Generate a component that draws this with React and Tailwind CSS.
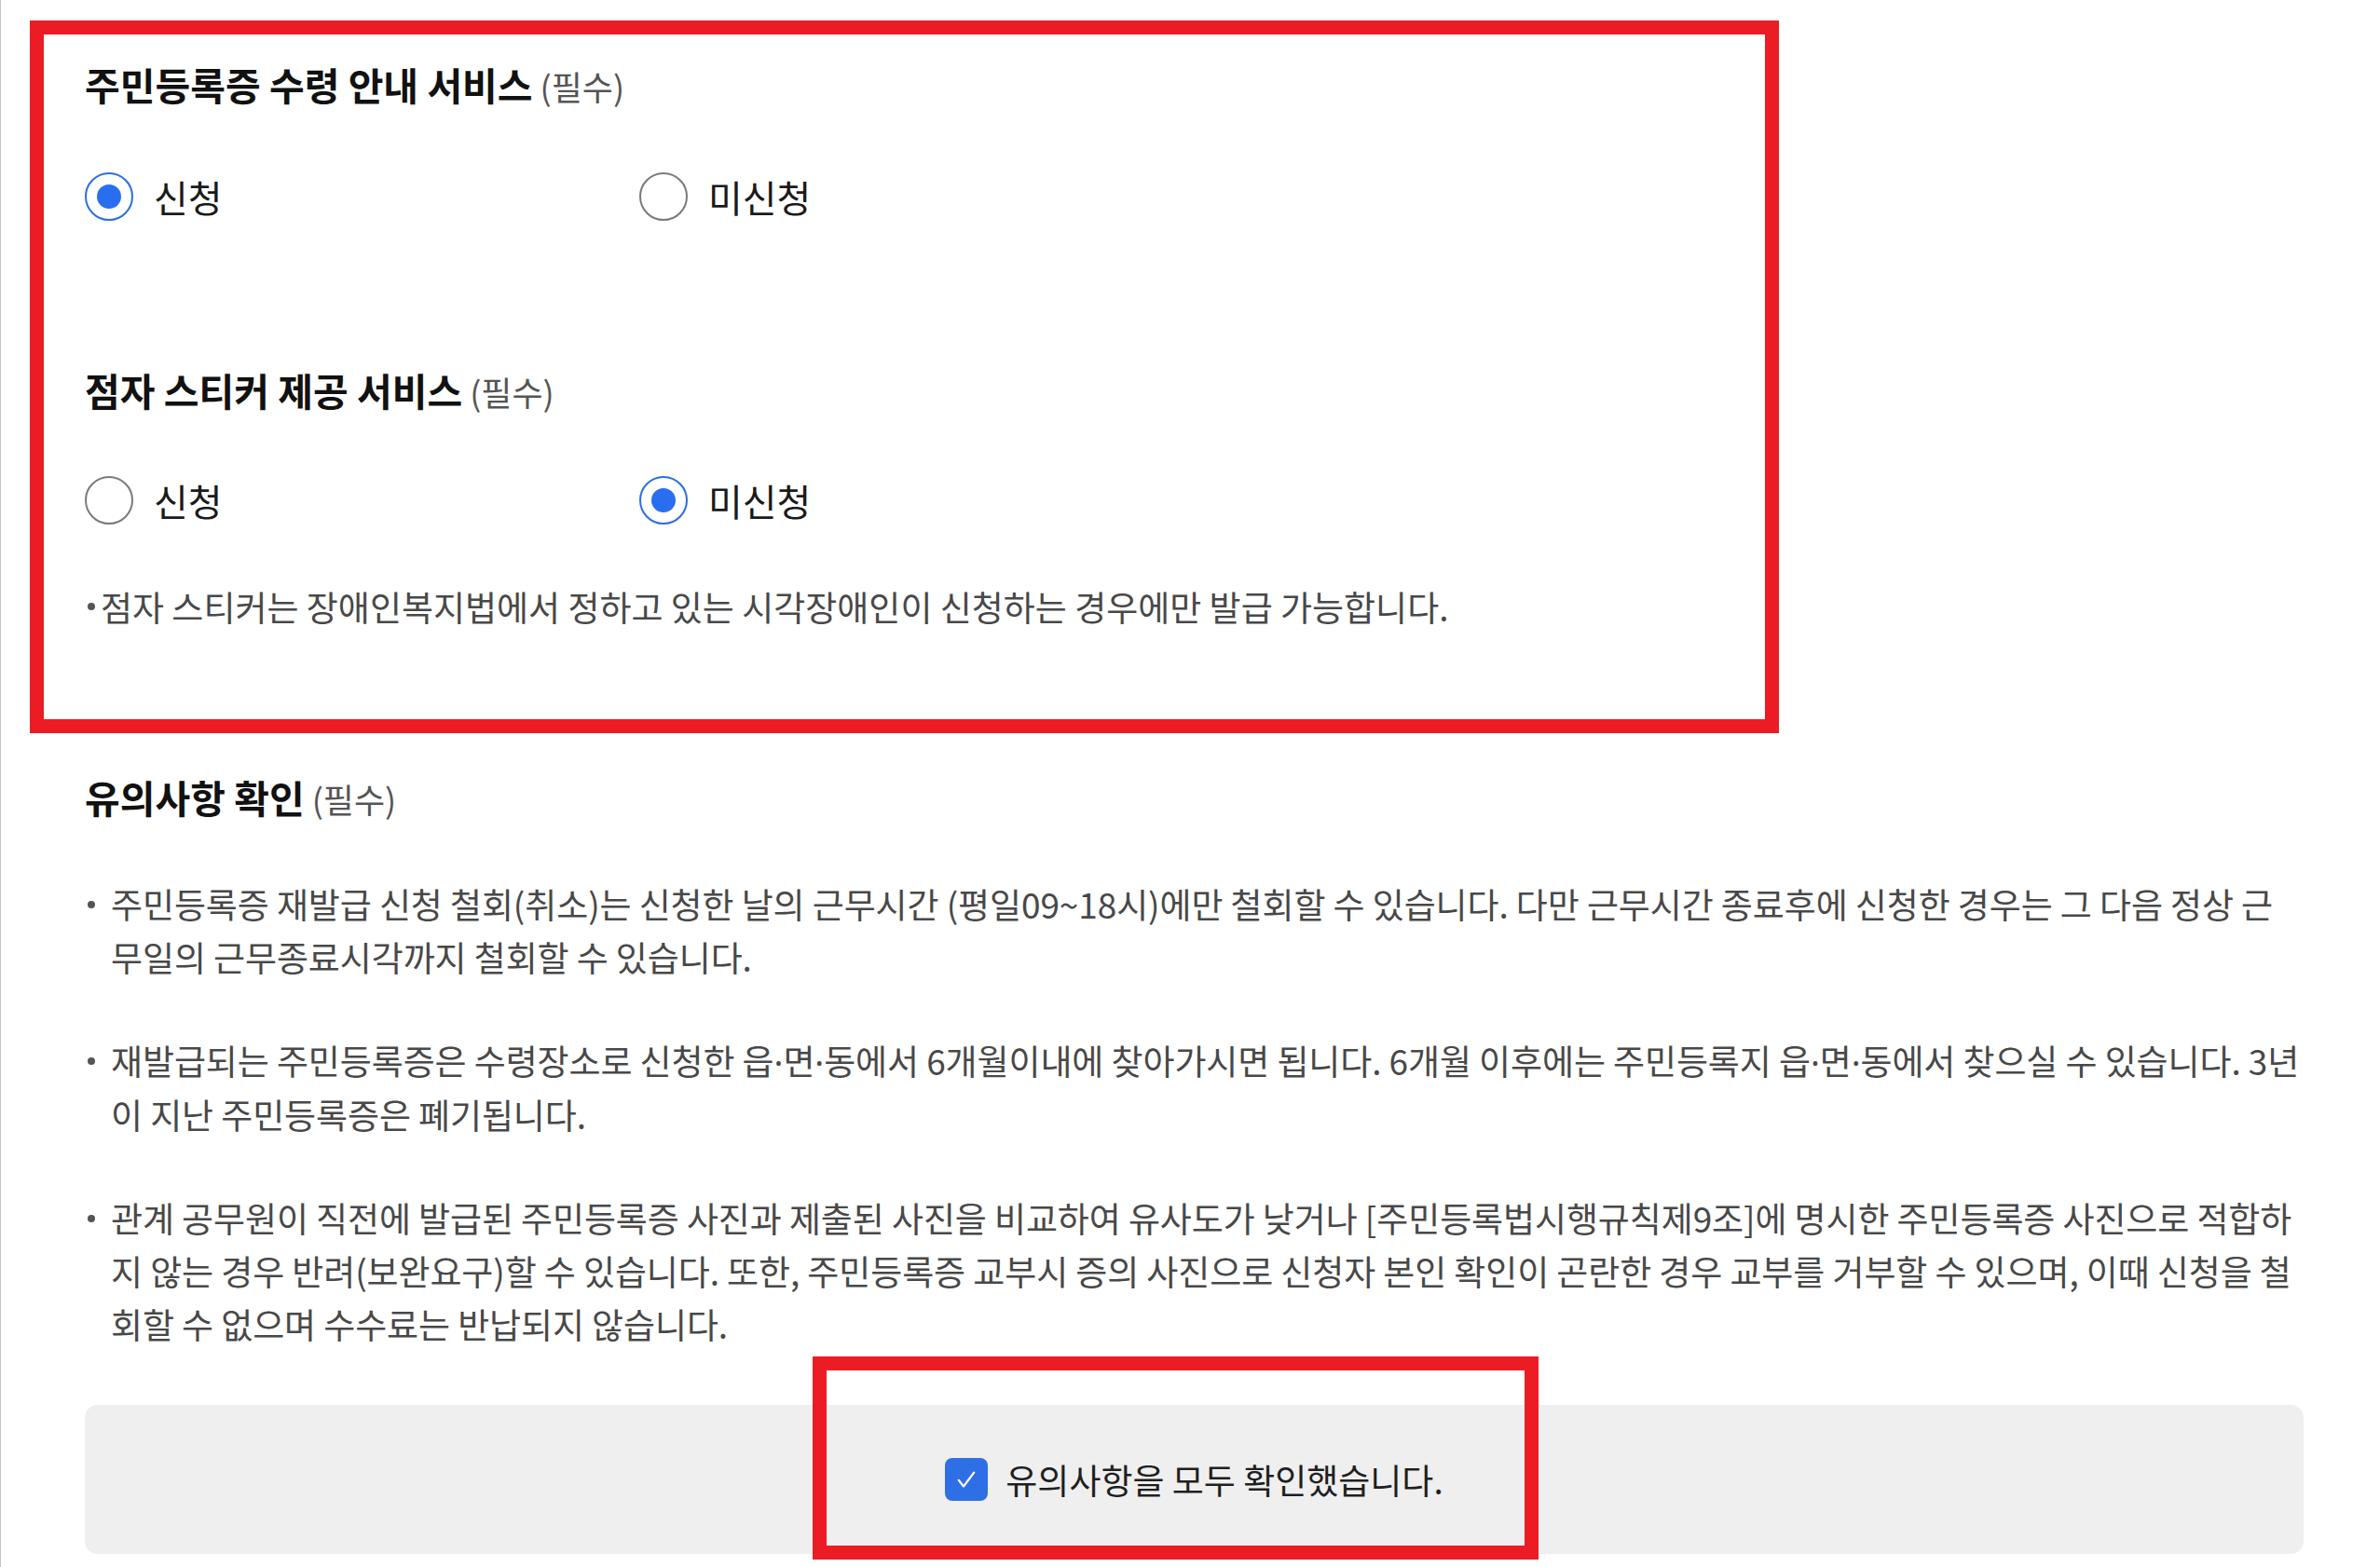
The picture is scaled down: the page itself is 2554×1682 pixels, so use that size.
import clsx from 'clsx'

const Radio = ({ checked, label }) => (
  <label className="flex items-center gap-[22px] w-[595px]">
    <span
      className={clsx(
        'w-[52px] h-[52px] rounded-full border-2 flex items-center justify-center bg-white',
        checked ? 'border-[#2c6ee0]' : 'border-[#7a7a7a]'
      )}
    >
      {checked && <span className="w-[26px] h-[26px] rounded-full bg-[#2a6ef0]" />}
    </span>
    <span className="text-[40px] leading-[56px] text-[#1a1a1a]">{label}</span>
  </label>
)

const Heading = ({ children, className }) => (
  <h2 className={clsx('text-[41px] leading-[48px] font-bold text-[#111] whitespace-nowrap', className)}>
    {children}
    <span className="ml-[8px] text-[36px] font-normal text-[#555]">(필수)</span>
  </h2>
)

const Dot = ({ className }) => (
  <span className={clsx('shrink-0 flex items-center', className)}>
    <span className="w-[8px] h-[8px] rounded-full bg-[#555]" />
  </span>
)

// 가운뎃점은 CJK 폰트에서 전각으로 나와서 라틴 폰트로 돌린다
const Line = ({ text }) => {
  const parts = text.split('·')
  return (
    <div className="whitespace-nowrap">
      {parts.map((p, i) => (
        <span key={i}>
          {i > 0 && <span className="font-['Noto_Sans',sans-serif]">·</span>}
          {p}
        </span>
      ))}
    </div>
  )
}

const notices = [
  [
    '주민등록증 재발급 신청 철회(취소)는 신청한 날의 근무시간 (평일09~18시)에만 철회할 수 있습니다. 다만 근무시간 종료후에 신청한 경우는 그 다음 정상 근',
    '무일의 근무종료시각까지 철회할 수 있습니다.',
  ],
  [
    '재발급되는 주민등록증은 수령장소로 신청한 읍·면·동에서 6개월이내에 찾아가시면 됩니다. 6개월 이후에는 주민등록지 읍·면·동에서 찾으실 수 있습니다. 3년',
    '이 지난 주민등록증은 폐기됩니다.',
  ],
  [
    '관계 공무원이 직전에 발급된 주민등록증 사진과 제출된 사진을 비교하여 유사도가 낮거나 [주민등록법시행규칙제9조]에 명시한 주민등록증 사진으로 적합하',
    '지 않는 경우 반려(보완요구)할 수 있습니다. 또한, 주민등록증 교부시 증의 사진으로 신청자 본인 확인이 곤란한 경우 교부를 거부할 수 있으며, 이때 신청을 철',
    '회할 수 없으며 수수료는 반납되지 않습니다.',
  ],
]

export default function App() {
  return (
    <div className="relative min-h-screen h-[1682px] overflow-hidden bg-white border-l border-[#c4c4c4] font-['Noto_Sans_CJK_KR','Noto_Sans',sans-serif]">
      <div className="pl-[90px] w-[2471px]">
        {/* 수령 안내 */}
        <Heading className="mt-[66px]">주민등록증 수령 안내 서비스</Heading>
        <div className="flex mt-[67px]">
          <Radio checked label="신청" />
          <Radio label="미신청" />
        </div>

        {/* 점자 스티커 */}
        <Heading className="mt-[155px]">점자 스티커 제공 서비스</Heading>
        <div className="flex mt-[65px]">
          <Radio label="신청" />
          <Radio checked label="미신청" />
        </div>
        <p className="mt-[62px] flex text-[37px] leading-[48px] text-[#484848] whitespace-nowrap">
          <Dot className="w-[17px] pl-[3px]" />
          점자 스티커는 장애인복지법에서 정하고 있는 시각장애인이 신청하는 경우에만 발급 가능합니다.
        </p>

        {/* 유의사항 */}
        <Heading className="mt-[156px]">유의사항 확인</Heading>
        <ul className="mt-[61px] flex flex-col gap-[54px]">
          {notices.map((lines, i) => (
            <li key={i} className="flex text-[37px] leading-[57px] text-[#484848] tracking-[-0.1px]">
              <div className="w-[28px] shrink-0 h-[57px] flex">
                <Dot className="pl-[3px]" />
              </div>
              <div>
                {lines.map((l, j) => (
                  <Line key={j} text={l} />
                ))}
              </div>
            </li>
          ))}
        </ul>

        <div className="mt-[58px] h-[160px] rounded-[14px] bg-[#efefef] flex items-center justify-center gap-[19px]">
          <span className="w-[46px] h-[46px] rounded-[8px] bg-[#2f6fe6] flex items-center justify-center">
            <svg width="36" height="36" viewBox="0 0 24 24" fill="none" stroke="white" strokeWidth="1.4" strokeLinecap="round" strokeLinejoin="round">
              <path d="M6.5 12.5l3.5 4.5L17.5 7" />
            </svg>
          </span>
          <span className="text-[37px] leading-[48px] text-[#1f1f1f]">유의사항을 모두 확인했습니다.</span>
        </div>
      </div>

      {/* annotation boxes */}
      <div className="absolute left-[31px] top-[22px] w-[1877px] h-[765px] border-[15px] border-[#ec1c24] pointer-events-none" />
      <div className="absolute left-[871px] top-[1456px] w-[779px] h-[218px] border-[15px] border-[#ec1c24] pointer-events-none" />
    </div>
  )
}
